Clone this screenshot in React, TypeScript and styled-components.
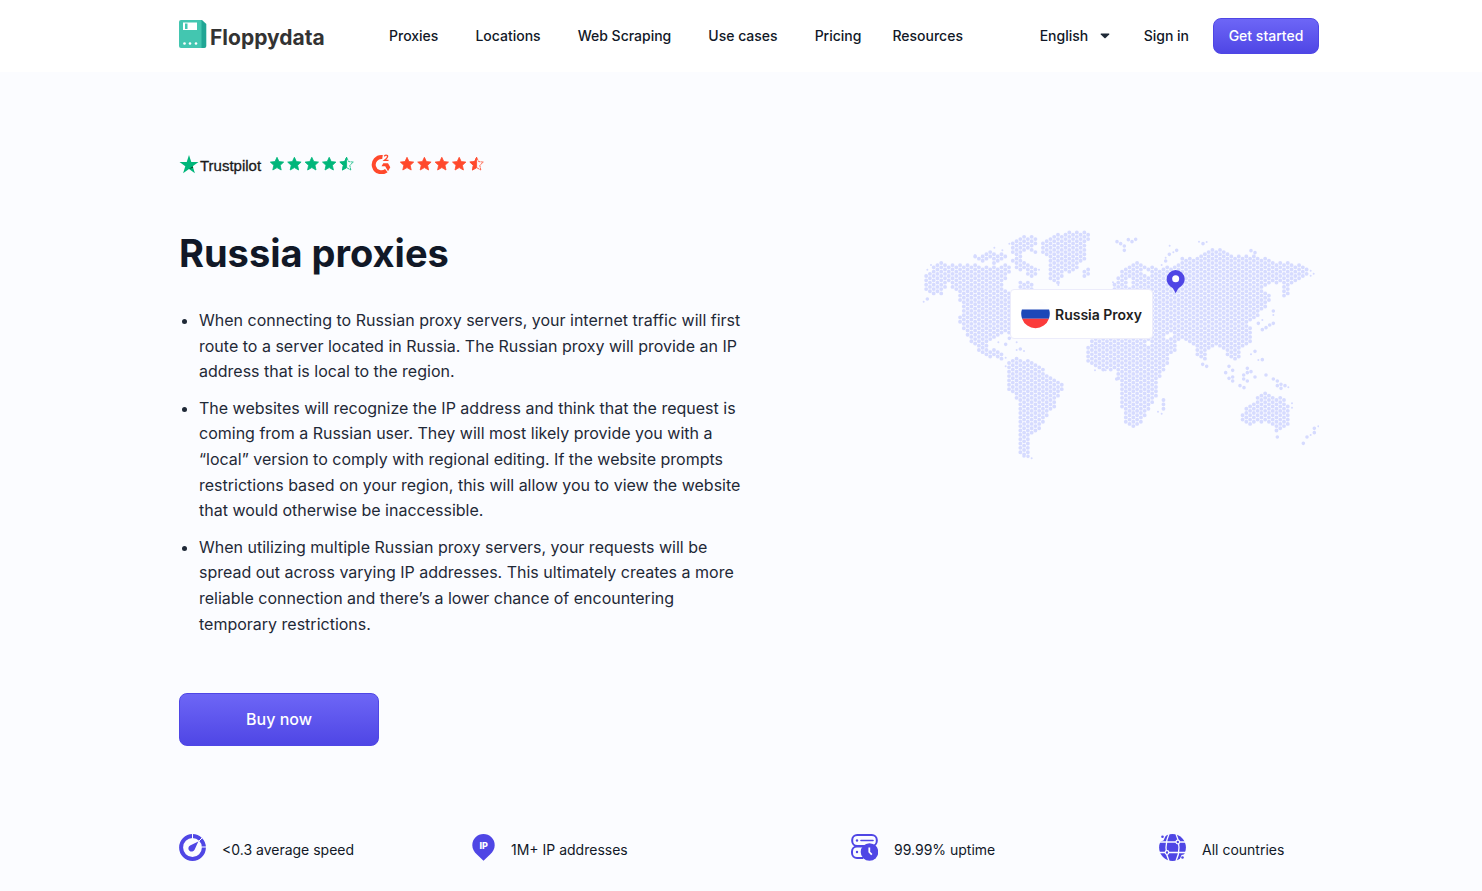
import React from "react";
import styled, { createGlobalStyle } from "styled-components";

const GlobalStyle = createGlobalStyle`
  *, *::before, *::after { box-sizing: border-box; }
  body {
    margin: 0;
    background: #fbfcff;
    color: #111827;
    font-family: Inter, "Liberation Sans", sans-serif;
    font-size: 14px;
  }
`;

const Header = styled.header`
  background: #fff;
`;

const Shell = styled.div`
  padding-left: 16px;
  display: flex;
  justify-content: center;
`;

const Inner = styled.div`
  width: 100%;
  max-width: 1140px;
`;

const Bar = styled(Inner)`
  display: flex;
  align-items: center;
  height: 72px;
`;

const Logo = styled.a`
  display: flex;
  align-items: flex-start;
  gap: 3px;
  width: 210px;
  color: #333;
  font-size: 21px;
  font-weight: 700;
  line-height: 28px;
  text-decoration: none;
`;

const LogoText = styled.span`
  padding-top: 4px;
`;

const Nav = styled.nav`
  display: flex;
  gap: 31px;
  margin-right: auto;
`;

const NavGroup = styled.div`
  display: flex;
  gap: 37px;
`;

const NavLink = styled.a`
  color: #111827;
  font-size: 14px;
  font-weight: 500;
  line-height: 20px;
  text-decoration: none;
  white-space: nowrap;
`;

const Language = styled.label`
  display: flex;
  align-items: center;
  margin-right: 34px;
`;

const LanguageSelect = styled.select`
  appearance: none;
  border: 0;
  padding: 0;
  width: 60px;
  background: transparent;
  color: #111827;
  font: 500 14px/20px Inter, "Liberation Sans", sans-serif;
`;

const Button = styled.button<{ $large?: boolean }>`
  display: block;
  width: ${(p) => (p.$large ? 200 : 106)}px;
  height: ${(p) => (p.$large ? 53 : 36)}px;
  margin-left: ${(p) => (p.$large ? 0 : 24)}px;
  padding: 0 0 2px;
  border: 1px solid #4f46e5;
  border-radius: 8px;
  background: linear-gradient(#6d66f6, #4f46e5);
  color: #fff;
  font-family: inherit;
  font-size: ${(p) => (p.$large ? 16 : 14)}px;
  font-weight: 500;
`;

const Ratings = styled.div`
  display: flex;
  align-items: center;
  height: 24px;
`;

const RatingLink = styled.a`
  display: flex;
  align-items: center;
  margin-right: 17px;
  color: #191919;
  font: 15px/20px "Liberation Sans", sans-serif;
  text-decoration: none;
`;

const BrandName = styled.span`
  margin: 4px 9px 0 1px;
  -webkit-text-stroke: 0.3px currentColor;
`;

const Main = styled.main`
  padding-top: 80px;
`;

const Hero = styled.div`
  display: grid;
  grid-template-columns: 1fr 400px;
  margin-top: 49px;
`;

const Copy = styled.div`
  max-width: 570px;
`;

const Title = styled.h1`
  margin: 0 0 31px;
  padding-top: 4px;
  font-size: 38px;
  font-weight: 700;
  line-height: 48px;
`;

const Points = styled.ul`
  margin: 0 0 56px;
  padding-left: 20px;
  color: #1f2937;
  font-size: 16px;
  font-weight: 400;
  line-height: 1.6;
`;

const Point = styled.li`
  & + & { margin-top: 11px; }
`;

const MapFigure = styled.figure`
  position: relative;
  width: 400px;
  height: 240px;
  margin: 0;
`;

const MapLabel = styled.figcaption`
  position: absolute;
  left: 91px;
  top: 64px;
  display: flex;
  align-items: center;
  gap: 5px;
  width: 143px;
  height: 50px;
  padding-left: 10px;
  border: 1px solid #ececfb;
  border-radius: 4px;
  background: #fff;
  color: #1e1e1e;
  font-size: 14px;
  font-weight: 600;
  white-space: nowrap;
`;

const Facts = styled.ul`
  display: grid;
  grid-template-columns: 293fr 379fr 308fr 160fr;
  margin: 88px 0 0;
  padding: 0 0 28px;
  list-style: none;
`;

const Fact = styled.li`
  display: flex;
  align-items: center;
  gap: 16px;
  font-size: 14px;
  line-height: 20px;
  white-space: nowrap;
`;

const FactText = styled.span`
  padding-top: 4px;
`;

const STAR = "M7 0.3 9 4.6 13.7 5.1 10.2 8.3 11.2 13 7 10.6 2.8 13 3.8 8.3 0.3 5.1 5 4.6Z";

function Stars({ color, label }: { color: string; label: string }) {
  return (
    <svg
      role="img"
      aria-label={label}
      width="84"
      height="14"
      viewBox="0 0 84 14"
      fill={color}
      stroke={color}
      strokeWidth="0.8"
      strokeLinejoin="round"
    >
      {[0, 17.4, 34.8, 52.2].map((x) => (
        <path key={x} d={STAR} transform={`translate(${x} 0)`} />
      ))}
      <g transform="translate(69.6 0)">
        <path d={STAR} fill="none" strokeDasharray="3 0.4" />
        <path d="M7 0.3V10.6L2.8 13 3.8 8.3 0.3 5.1 5 4.6Z" />
      </g>
    </svg>
  );
}

type Pt = [number, number];

/* Land outlines, in map units of a third of a pixel. */
const LAND: Pt[][] = [
  [[24,165],[35,145],[70,108],[110,116],[200,120],[250,128],[275,112],[290,118],[285,150],[268,165],[270,190],[290,205],[290,325],[245,333],[222,345],[220,372],[240,372],[256,380],[270,405],[262,412],[235,398],[195,384],[170,356],[146,318],[133,285],[140,240],[125,195],[100,178],[80,208],[50,208],[24,197]],
  [[178,95],[205,85],[235,72],[245,90],[272,82],[275,105],[245,120],[225,105],[200,120],[190,105]],
  [[288,45],[330,28],[368,35],[360,60],[362,82],[345,75],[325,88],[312,105],[288,80]],
  [[286,105],[310,98],[345,115],[368,135],[360,155],[335,160],[328,140],[300,128]],
  [[312,165],[335,170],[357,183],[350,195],[312,195]],
  [[378,45],[400,35],[455,20],[518,22],[532,42],[512,60],[510,105],[475,138],[445,148],[428,175],[402,172],[400,105],[378,80]],
  [[500,145],[515,130],[535,145],[515,160]],
  [[590,180],[610,150],[630,122],[660,106],[690,118],[740,132],[785,118],[795,102],[850,92],[890,74],[928,72],[950,92],[1030,94],[1080,110],[1150,116],[1185,130],[1178,145],[1165,155],[1130,175],[1128,210],[1106,212],[1102,178],[1070,178],[1042,190],[1066,213],[1060,240],[1030,272],[1003,290],[1014,325],[1010,360],[978,370],[970,412],[950,402],[920,375],[905,358],[888,368],[868,405],[852,405],[835,360],[810,345],[790,350],[785,372],[760,390],[755,428],[727,462],[726,512],[705,545],[685,590],[664,604],[635,602],[625,565],[612,530],[616,480],[602,458],[608,435],[560,437],[530,425],[514,400],[514,370],[535,342],[640,335],[640,195],[595,192]],
  [[278,415],[305,398],[345,408],[388,435],[400,452],[435,462],[446,478],[444,498],[425,522],[420,550],[400,567],[388,597],[362,624],[346,634],[345,676],[330,696],[310,682],[308,590],[314,535],[285,502],[276,480]],
  [[980,575],[985,555],[1005,543],[1030,510],[1065,500],[1078,520],[1090,520],[1095,507],[1112,530],[1128,558],[1122,596],[1105,617],[1080,622],[1068,600],[1045,590],[1010,598],[985,604]],
  [[734,528],[755,502],[755,548],[736,562]],
];

const WATER: Pt[] = [[762,333],[706,355],[645,168],[696,141],[640,180]];

const ISLETS: Pt[] = [
  [942,424],[953,436],[932,443],[942,460],[953,456],[953,468],[975,482],[987,488],[997,430],[986,450],[986,462],[997,443],[997,468],[1020,456],[1008,440],[1053,450],[1075,462],[1087,468],[1087,482],[1098,478],[1098,490],[1110,482],[1020,379],[1042,404],
  [1198,610],[1198,623],[1176,636],[1165,655],[1087,636],[1075,258],[1075,295],[1064,300],[1053,308],[1042,314],[1030,295],
  [606,50],[617,56],[628,63],[628,76],[640,44],[651,50],[662,43],[752,108],[763,88],[785,76],[864,56],[1008,77],[1020,83],
  [272,358],[316,372],[283,340],[37,222],[863,418],[875,424],[605,462],[327,693],[339,694],
];

const SPECKS: Pt[] = [
  [26,230],[37,134],[48,120],[305,352],[305,375],[327,378],[250,352],[272,398],[272,424],[283,56],[372,134],[430,180],[752,98],[775,82],[852,50],[875,51],[1187,137],[1187,152],[1196,146],[1131,535],[1120,487],[1187,630],[1210,604],[350,700],[729,560],[740,566],[1019,253],[1075,270],[1042,285],[180,90],[238,68],[262,76],[572,436],[540,436],[594,172],[740,120],[764,62],[1131,548],[1008,388],[1030,405],
];

const inside = (x: number, y: number, poly: Pt[]) => {
  let hit = false;
  for (let i = 0, j = poly.length - 1; i < poly.length; j = i++) {
    const [xi, yi] = poly[i];
    const [xj, yj] = poly[j];
    if (yi > y !== yj > y && x < ((xj - xi) * (y - yi)) / (yj - yi) + xi) hit = !hit;
  }
  return hit;
};

const dot = (x: number, y: number, r: number) =>
  `M${(x - r).toFixed(1)} ${y.toFixed(1)}a${r} ${r} 0 1 0 ${2 * r} 0a${r} ${r} 0 1 0 ${-2 * r} 0`;

/* Dots sit on a honeycomb: every other column is shifted by half a step. */
const buildDots = () => {
  const parts: string[] = [];
  for (let c = -27; c < 80; c++) {
    const x = 316 + c * 11.3;
    for (let r = 0; r < 56; r++) {
      const y = 3 + r * 13.05 + (c % 2 ? 6.5 : 0);
      if (WATER.some(([wx, wy]) => Math.hypot(wx - x, wy - y) < 8)) continue;
      if (LAND.some((poly) => inside(x, y, poly))) parts.push(dot(x, y, 5.8));
    }
  }
  ISLETS.forEach(([x, y]) => parts.push(dot(x, y, 5.4)));
  SPECKS.forEach(([x, y]) => parts.push(dot(x, y, 3)));
  return parts.join("");
};

const DOTS = buildDots();

function WorldMap() {
  return (
    <MapFigure>
      <svg width="400" height="240" viewBox="12 0 1200 720" aria-hidden="true">
        <path d={DOTS} fill="#d6dbff" />
        <path
          d="M782 135a27 27 0 0 1 27 27c0 13-8 20-15 25-5 4-7 9-12 18-5-9-7-14-12-18-7-5-15-12-15-25a27 27 0 0 1 27-27Z"
          fill="#4f46e5"
        />
        <circle cx="782" cy="161" r="10.5" fill="#fff" />
      </svg>
      <MapLabel>
        <svg width="29" height="29" viewBox="0 0 29 29" aria-hidden="true">
          <circle cx="14.5" cy="13.5" r="14" fill="#fdfdff" />
          <path d="M.9 9.500h27.200a14.200 14.200 0 0 1-.2 9.200H1.100a14.200 14.200 0 0 1-.2-9.200Z" fill="#1c47b8" />
          <path d="M1.100 18.700h26.800a14.200 14.200 0 0 1-26.800 0Z" fill="#fb3b3b" />
        </svg>
        Russia Proxy
      </MapLabel>
    </MapFigure>
  );
}

const INDIGO = "#4f46e5";

const SpeedIcon = () => (
  <svg width="27" height="27" viewBox="0 0 27 27" aria-hidden="true">
    <circle cx="13.5" cy="13.5" r="11.4" fill="none" stroke={INDIGO} strokeWidth="4" />
    <path d="M13.500 0V4.500M20 7l3-3M22.500 13H27" stroke="#fbfcff" strokeWidth="1" />
    <path d="M19.300 7.600 15.700 15.600a3.300 3.300 0 1 1-4.600-4.200Z" fill={INDIGO} />
  </svg>
);

const IpIcon = () => (
  <svg width="23" height="27" viewBox="0 0 23 27" aria-hidden="true">
    <path d="M11.500 0a11.200 11.200 0 0 1 11.200 11.200c0 4-2 6.600-4.400 9L11.500 26.800 4.700 20.200c-2.400-2.400-4.400-5-4.400-9A11.200 11.200 0 0 1 11.500 0Z" fill={INDIGO} />
    <text x="11.7" y="14.6" textAnchor="middle" fill="#fff" fontFamily="Inter, sans-serif" fontSize="9" fontWeight="800">IP</text>
  </svg>
);

const UptimeIcon = () => (
  <svg width="27" height="27" viewBox="0 0 27 27" aria-hidden="true" fill="none" stroke={INDIGO} strokeWidth="2">
    <rect x="1.2" y="1" width="24.6" height="11" rx="5" />
    <path d="M10 6.500h12" strokeWidth="1.6" strokeLinecap="round" />
    <path d="M14 12.500H6a5 5 0 0 0-5 5v1.500a5 5 0 0 0 5 5h6" />
    <circle cx="6" cy="6.5" r="1.2" fill={INDIGO} stroke="none" />
    <circle cx="6" cy="18" r="1.2" fill={INDIGO} stroke="none" />
    <circle cx="18.5" cy="18" r="8.8" fill={INDIGO} stroke="none" />
    <path d="M18.300 13.500V18l2.500 2.600" stroke="#fff" strokeWidth="1.8" />
  </svg>
);

const GlobeIcon = () => (
  <svg width="27" height="27" viewBox="0 0 27 27" aria-hidden="true">
    <circle cx="13.5" cy="13.5" r="13.4" fill={INDIGO} />
    <g fill="none" stroke="#fbfcff" strokeWidth="1.3">
      <path d="M1 8h25M0 18.500h27M10 0C6 8 6 19 10 27M17 0c4 8 4 19 0 27" />
    </g>
    <path d="M0 0H7.500L4.500 6.500 0 8ZM27 27H20l2.500-6L27 20Z" fill="#fbfcff" />
    <g fill={INDIGO}>
      <circle cx="3.5" cy="2.7" r="1.3" />
      <circle cx="23.5" cy="23.5" r="1.3" />
    </g>
    <g fill={INDIGO} stroke="#fbfcff" strokeWidth="1.2">
      <circle cx="18.8" cy="8" r="1.8" />
      <circle cx="8" cy="18.5" r="1.8" />
    </g>
  </svg>
);

const NAV = ["Proxies", "Locations", "Web Scraping", "Use cases", "Pricing"];

const POINTS = [
  "When connecting to Russian proxy servers, your internet traffic will first route to a server located in Russia. The Russian proxy will provide an IP address that is local to the region.",
  "The websites will recognize the IP address and think that the request is coming from a Russian user. They will most likely provide you with a “local” version to comply with regional editing. If the website prompts restrictions based on your region, this will allow you to view the website that would otherwise be inaccessible.",
  "When utilizing multiple Russian proxy servers, your requests will be spread out across varying IP addresses. This ultimately creates a more reliable connection and there’s a lower chance of encountering temporary restrictions.",
];

const FACTS = [
  { icon: <SpeedIcon />, text: "<0.3 average speed" },
  { icon: <IpIcon />, text: "1M+ IP addresses" },
  { icon: <UptimeIcon />, text: "99.99% uptime" },
  { icon: <GlobeIcon />, text: "All countries" },
];

export default function App() {
  return (
    <>
      <GlobalStyle />
      <Header>
        <Shell>
          <Bar>
            <Logo href="#">
              <svg width="28" height="28" viewBox="0 0 28 28" aria-hidden="true">
                <path d="M20 0h3l4.300 4v22a2 2 0 0 1-2 2H20Z" fill="#20a695" />
                <path d="M2 0h20.500v28H2a2 2 0 0 1-2-2V2a2 2 0 0 1 2-2Z" fill="#43c6b0" />
                <path d="M4 2.500h14v7.500H4Z" fill="#fff" />
                <path d="M6 3.500h2.500v5.500H6Z" fill="#43c6b0" />
                <g fill="#fff">
                  <circle cx="5.5" cy="23.5" r="1.3" />
                  <circle cx="11" cy="23.5" r="1.3" />
                  <circle cx="17" cy="23.5" r="1.3" />
                </g>
              </svg>
              <LogoText>Floppydata</LogoText>
            </Logo>
            <Nav>
              <NavGroup>
                {NAV.map((item) => (
                  <NavLink key={item} href="#">{item}</NavLink>
                ))}
              </NavGroup>
              <NavLink href="#">Resources</NavLink>
            </Nav>
            <Language>
              <LanguageSelect aria-label="Language">
                <option>English</option>
              </LanguageSelect>
              <svg width="10" height="6" viewBox="0 0 10 6" aria-hidden="true">
                <path d="M1 .5h8q.8.3.2 1L5.600 5q-.6.5-1.200 0L.8 1.500Q.2.800 1 .5Z" fill="#1f2937" />
              </svg>
            </Language>
            <NavLink href="#">Sign in</NavLink>
            <Button type="button">Get started</Button>
          </Bar>
        </Shell>
      </Header>
      <Main>
        <Shell>
          <Inner>
            <Ratings>
              <RatingLink href="#">
                <svg width="20" height="19" viewBox="0 0 20 19" aria-hidden="true">
                  <path d="M10 0l2.300 6.900H19.500L13.700 11.200 15.900 18.200 10 13.900 4.100 18.200 6.300 11.200.5 6.900H7.700Z" fill="#00b67a" />
                  <path d="M14.200 12.700l-.5-1.500L10 13.900Z" fill="#005128" />
                </svg>
                <BrandName>Trustpilot</BrandName>
                <Stars color="#00b67a" label="4.5 stars on Trustpilot" />
              </RatingLink>
              <RatingLink href="#">
                <svg width="29" height="20" viewBox="0 0 29 20" aria-hidden="true">
                  <path d="M11.500 3A7.700 7.700 0 1 0 15.300 16.600" fill="none" stroke="#ff492c" strokeWidth="4" />
                  <path d="M10.500 12.200 12.300 9.300H17L19.300 13.300 17 17.300 14.200 12.200Z" fill="#ff492c" />
                  <path d="M13.200 2.200q1.600-1.700 3.100-.7 1.200 1.600-2.800 4.900h4" fill="none" stroke="#ff492c" strokeWidth="1.4" />
                </svg>
                <Stars color="#ff492c" label="4.5 stars on G2" />
              </RatingLink>
            </Ratings>
            <Hero>
              <Copy>
                <Title>Russia proxies</Title>
                <Points>
                  {POINTS.map((text) => (
                    <Point key={text}>{text}</Point>
                  ))}
                </Points>
                <Button type="button" $large>Buy now</Button>
              </Copy>
              <WorldMap />
            </Hero>
            <Facts>
              {FACTS.map(({ icon, text }) => (
                <Fact key={text}>
                  {icon}
                  <FactText>{text}</FactText>
                </Fact>
              ))}
            </Facts>
          </Inner>
        </Shell>
      </Main>
    </>
  );
}
